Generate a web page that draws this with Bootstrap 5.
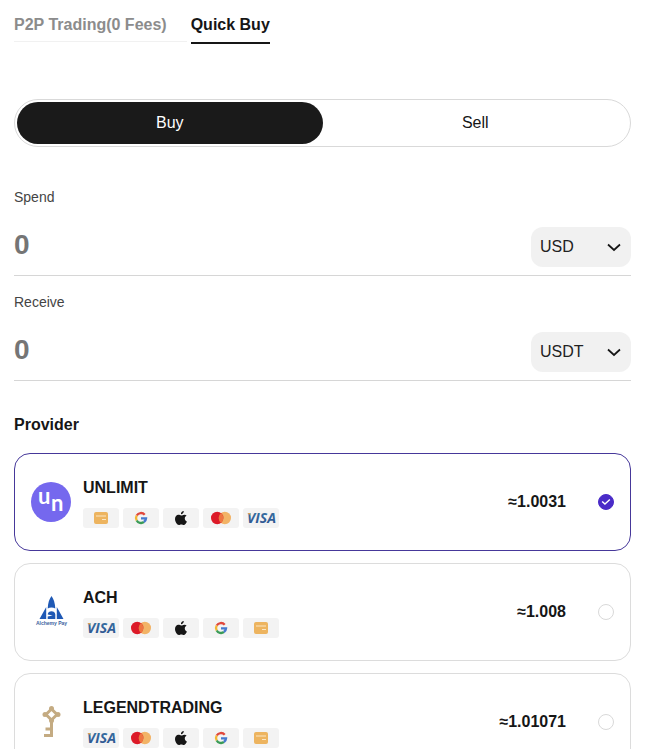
<!DOCTYPE html>
<html lang="en">
<head>
<meta charset="utf-8">
<meta name="viewport" content="width=device-width, initial-scale=1">
<title>Quick Buy</title>
<link href="https://cdn.jsdelivr.net/npm/bootstrap@5.3.0/dist/css/bootstrap.min.css" rel="stylesheet">
<style>
  body { font-family: "Liberation Sans", Arial, sans-serif; font-size: 16px; line-height: 24px; color: #161616; background: #fff; }
  .page { padding: 13px 28px 24px 14px; }
  .tabs { gap: 24px; margin-bottom: 55px; }
  .tabs .tab { position: relative; padding: 0 0 5px; border-radius: 0; border-bottom: 2px solid transparent; color: #8c8c8c; font-weight: 700; }
  .tabs .tab.active { color: #161616; border-color: #161616; }
  .tabs .tab:not(.active)::after { content: ""; position: absolute; left: 0; right: -20px; bottom: 0; height: 1px; background: #f1f1f1; }
  .switch { height: 48px; padding: 2px; border: 1px solid #d9d9d9; margin-bottom: 40px; }
  .switch button { border: 0; background: transparent; color: #161616; font-size: 16px; padding: 0; }
  .switch button.active { background: #1a1a1a; color: #fff; }
  .amount { border-bottom: 1px solid #d6d6d6; padding-bottom: 8px; margin-bottom: 16px; }
  .amount label { font-size: 14px; line-height: 20px; color: #444; margin-bottom: 20px; }
  .amount .value { height: 36px; padding: 0; border: 0; font-size: 28px; line-height: 36px; font-weight: 700; color: #161616; background: transparent; box-shadow: none; }
  .amount .value::placeholder { color: #757575; opacity: 1; }
  .amount select { width: 100px; height: 40px; flex: none; border: 0; border-radius: 12px; padding: 0 32px 0 9px; color: #222; background-color: #f1f1f1; background-position: right 8px center; background-size: 18px 18px;
    background-image: url("data:image/svg+xml,%3Csvg xmlns='http://www.w3.org/2000/svg' viewBox='0 0 18 18' fill='none' stroke='%23161616' stroke-width='1.7'%3E%3Cpath d='M3 6.5l6 5.5 6-5.5'/%3E%3C/svg%3E"); }
  .heading { font-size: 16px; line-height: 24px; font-weight: 700; margin: 32px 0 16px; }
  .providers { gap: 12px; }
  .provider { padding: 22px 16px; border: 1px solid #dcdcdc; border-radius: 16px; cursor: pointer; font-weight: 700; }
  .provider:has(input:checked) { border-color: #46389a; }
  .provider .logo { width: 40px; height: 40px; flex: none; margin-right: 12px; }
  .methods { gap: 4px; margin-top: 8px; }
  .method { width: 36px; height: 20px; border-radius: 3px; background: #f3f3f3; }
  .provider input { width: 16px; height: 16px; margin: 0 0 0 32px; border: 1px solid #d9d9d9; flex: none; }
  .provider input:checked { background-color: #4a2bc8; border-color: #4a2bc8;
    background-image: url("data:image/svg+xml,%3Csvg xmlns='http://www.w3.org/2000/svg' viewBox='0 0 16 16' fill='none' stroke='white' stroke-width='1.6'%3E%3Cpath d='M3.6 7.3l3.2 3.1 5.6-5.2'/%3E%3C/svg%3E"); }
</style>
<script src="https://cdn.jsdelivr.net/npm/bootstrap@5.3.0/dist/js/bootstrap.bundle.min.js"></script>
</head>
<body>
<svg width="0" height="0" class="position-absolute" aria-hidden="true">
  <defs>
    <linearGradient id="visaBlue" x1="0" x2="0" y1="0" y2="1"><stop offset="0" stop-color="#3a78a8"/><stop offset="1" stop-color="#2c4f8c"/></linearGradient>
    <symbol id="wallet" viewBox="0 0 36 20">
      <rect x="11" y="4" width="14" height="12" rx="2" fill="#edb45f"/>
      <path d="M13 8h10M19 11.5h4" stroke="#fbe6c4" stroke-width="1"/>
    </symbol>
    <symbol id="google" viewBox="0 0 36 20">
      <g fill="none" stroke-width="2.4">
        <path d="M21.7 6.7A5 5 0 0 0 13.7 7.5" stroke="#e0483c"/>
        <path d="M13.7 7.5A5 5 0 0 0 13.7 12.5" stroke="#f2b632"/>
        <path d="M13.7 12.5A5 5 0 0 0 20.9 14.1" stroke="#3a9b57"/>
        <path d="M20.9 14.1A5 5 0 0 0 23 10.4H18" stroke="#4679cf"/>
      </g>
    </symbol>
    <symbol id="apple" viewBox="0 0 36 20">
      <path fill="#161616" d="M20.8 3c.1 1.8-1.300 3.200-2.900 3.200C17.700 4.500 19.200 3.100 20.800 3zM23.600 7.700c-1.300.8-1.900 1.700-1.800 2.900 0 1.400.8 2.400 2.100 2.900-.5 1.500-1.800 3.500-3.200 3.500-.9 0-1.300-.5-2.400-.5s-1.500.5-2.400.5c-1.900 0-3.900-3.300-3.900-6 0-2.600 1.600-4.200 3.400-4.200 1.200 0 1.900.7 2.900.7.900 0 1.700-.8 3.100-.8.900 0 1.700.4 2.200 1z"/>
    </symbol>
    <symbol id="mastercard" viewBox="0 0 36 20">
      <circle cx="21.800" cy="10" r="6.200" fill="#f2b366"/>
      <circle cx="14.200" cy="10" r="6.200" fill="#dc1a28"/>
      <path d="M18 5.100a6.200 6.200 0 0 1 0 9.800 6.200 6.200 0 0 1 0-9.800z" fill="#ee7440"/>
    </symbol>
    <symbol id="visa" viewBox="0 0 36 20">
      <text x="4" y="15" font-family="Open Sans, Noto Sans, sans-serif" font-size="14" font-weight="700" font-style="italic" fill="url(#visaBlue)">VISA</text>
      <path d="M4 5h3l1 3c-1-1.500-2.200-2.400-4-3z" fill="#e3a548"/>
    </symbol>
  </defs>
</svg>

<main class="page">
  <nav class="tabs d-flex" aria-label="Trade type">
    <a href="#p2p" class="tab text-decoration-none">P2P Trading(0 Fees)</a>
    <a href="#quick" class="tab active text-decoration-none" aria-current="page">Quick Buy</a>
  </nav>

  <div class="switch d-flex rounded-pill">
    <button type="button" class="active rounded-pill w-50" aria-pressed="true">Buy</button>
    <button type="button" class="rounded-pill w-50" aria-pressed="false">Sell</button>
  </div>

  <div class="amount">
    <label for="spend" class="d-block">Spend</label>
    <div class="d-flex align-items-start">
      <input id="spend" class="value form-control" type="text" inputmode="decimal" placeholder="0">
      <select class="form-select" aria-label="Spend currency"><option>USD</option><option>EUR</option></select>
    </div>
  </div>
  <div class="amount">
    <label for="receive" class="d-block">Receive</label>
    <div class="d-flex align-items-start">
      <input id="receive" class="value form-control" type="text" inputmode="decimal" placeholder="0">
      <select class="form-select" aria-label="Receive currency"><option>USDT</option><option>BTC</option></select>
    </div>
  </div>

  <h2 class="heading">Provider</h2>
  <div class="providers d-flex flex-column" role="radiogroup" aria-label="Provider">
    <label class="provider d-flex align-items-center" for="unlimit">
      <svg class="logo" viewBox="0 0 40 40" aria-hidden="true">
        <circle cx="20" cy="20" r="20" fill="#7568ee"/>
        <g fill="#fff" font-family="Lato, sans-serif" font-size="22" font-weight="700"><text x="7" y="22">u</text><text x="20" y="29">n</text></g>
      </svg>
      <span class="flex-grow-1">
        <span class="d-block">UNLIMIT</span>
        <span class="methods d-flex">
          <svg class="method"><use href="#wallet"/></svg><svg class="method"><use href="#google"/></svg><svg class="method"><use href="#apple"/></svg><svg class="method"><use href="#mastercard"/></svg><svg class="method"><use href="#visa"/></svg>
        </span>
      </span>
      <span>≈1.0031</span>
      <input class="form-check-input" type="radio" name="provider" id="unlimit" checked>
    </label>

    <label class="provider d-flex align-items-center" for="ach">
      <svg class="logo" viewBox="0 0 40 40" aria-hidden="true">
        <g fill="#1f59b5">
          <path d="M20.500 4c2.200 3 3.600 7 3.800 12.500-2.200-1.200-5.400-1.200-7.600 0C16.900 11 18.300 7 20.500 4z"/>
          <path d="M15.200 15v12H8.500zM25.800 15v12h6.700z"/>
          <path d="M16.700 22.500c0-4.500 7.600-4.500 7.600 0V27h-7.600v-2.500l5-1z"/>
        </g>
        <text x="20.500" y="33" text-anchor="middle" font-family="Liberation Sans, sans-serif" font-size="5" fill="#3c5f9e">Alchemy Pay</text>
      </svg>
      <span class="flex-grow-1">
        <span class="d-block">ACH</span>
        <span class="methods d-flex">
          <svg class="method"><use href="#visa"/></svg><svg class="method"><use href="#mastercard"/></svg><svg class="method"><use href="#apple"/></svg><svg class="method"><use href="#google"/></svg><svg class="method"><use href="#wallet"/></svg>
        </span>
      </span>
      <span>≈1.008</span>
      <input class="form-check-input" type="radio" name="provider" id="ach">
    </label>

    <label class="provider d-flex align-items-center" for="legend">
      <svg class="logo" viewBox="0 0 40 40" aria-hidden="true">
        <g fill="none" stroke="#c4ab82">
          <path d="M20.500 7l5.500 5.500-5.500 5.500-5.500-5.500z" stroke-width="3"/>
          <path d="M20.500 18v17" stroke-width="3"/>
          <path d="M20 27h-5.500M20 33.500h-7" stroke-width="3"/>
        </g>
        <g fill="#c4ab82"><circle cx="20.500" cy="6.500" r="2.500"/><circle cx="14" cy="12.500" r="2.500"/><circle cx="27" cy="12.500" r="2.500"/><circle cx="20.500" cy="18.500" r="2.500"/></g>
      </svg>
      <span class="flex-grow-1">
        <span class="d-block">LEGENDTRADING</span>
        <span class="methods d-flex">
          <svg class="method"><use href="#visa"/></svg><svg class="method"><use href="#mastercard"/></svg><svg class="method"><use href="#apple"/></svg><svg class="method"><use href="#google"/></svg><svg class="method"><use href="#wallet"/></svg>
        </span>
      </span>
      <span>≈1.01071</span>
      <input class="form-check-input" type="radio" name="provider" id="legend">
    </label>
  </div>
</main>
</body>
</html>
